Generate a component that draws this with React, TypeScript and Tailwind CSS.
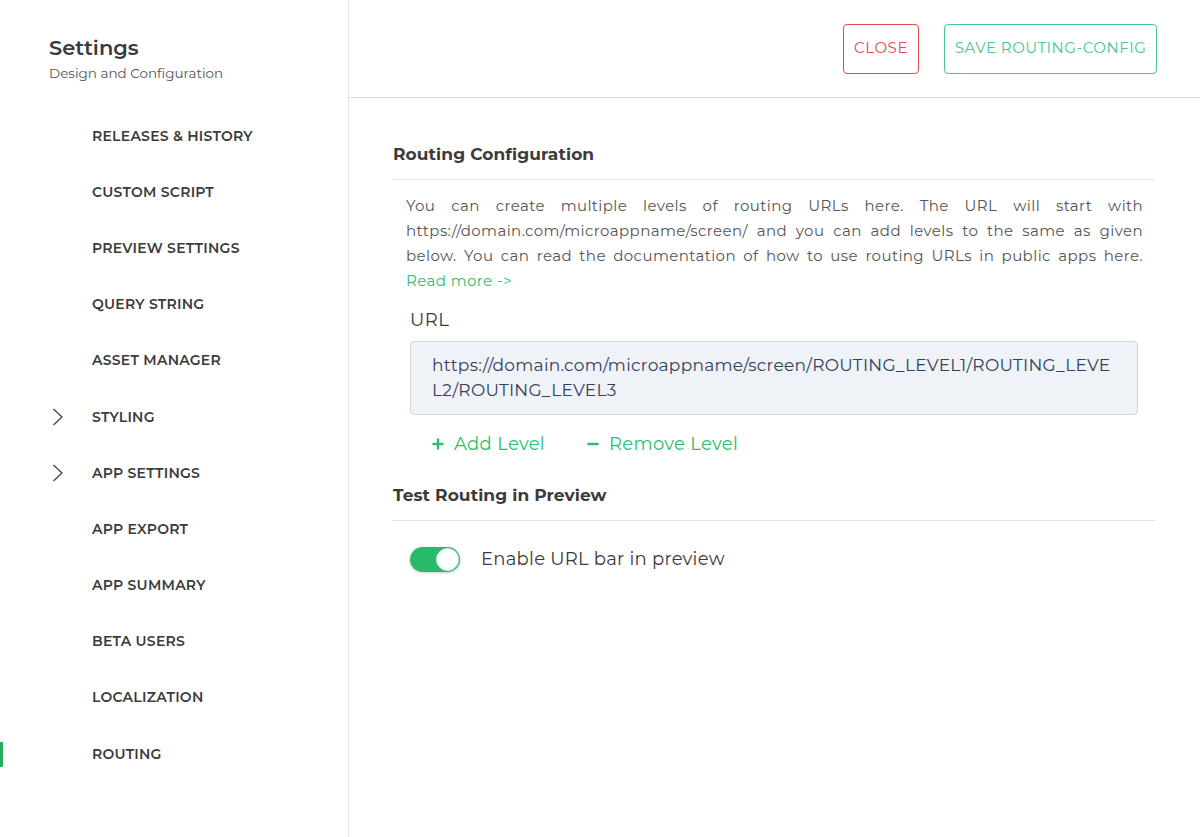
import { Plus, Minus } from "lucide-react"

const navItems = [
  { label: "RELEASES & HISTORY" },
  { label: "CUSTOM SCRIPT" },
  { label: "PREVIEW SETTINGS" },
  { label: "QUERY STRING" },
  { label: "ASSET MANAGER" },
  { label: "STYLING", chevron: true },
  { label: "APP SETTINGS", chevron: true },
  { label: "APP EXPORT" },
  { label: "APP SUMMARY" },
  { label: "BETA USERS" },
  { label: "LOCALIZATION" },
  { label: "ROUTING", active: true },
]

function Chevron() {
  return (
    <svg width="12" height="18" viewBox="0 0 12 18" fill="none" stroke="#444" strokeWidth="1.3">
      <path d="M1.5 1 L10 9 L1.5 17" />
    </svg>
  )
}

function Sidebar() {
  return (
    <aside className="w-[349px] shrink-0 border-r border-[#e3e3e3] min-h-[837px]">
      <div className="pl-[49px] pt-[35px]">
        <h1 className="text-[21px] leading-[26px] font-semibold text-[#3b3b3b]">Settings</h1>
        <p className="text-[13.5px] leading-[16px] mt-[4px] text-[#555]">Design and Configuration</p>
      </div>
      <nav className="mt-[27px]">
        {navItems.map((item) => (
          <div key={item.label} className="relative h-[56.2px] flex items-center">
            {item.active && <span className="absolute left-0 top-[16px] w-[3px] h-[25px] bg-[#27ae60]" />}
            <span className="w-[92px] flex justify-start pl-[52px]">{item.chevron && <Chevron />}</span>
            <span className="text-[14px] font-semibold tracking-[0.25px] text-[#3b3b3b]">{item.label}</span>
          </div>
        ))}
      </nav>
    </aside>
  )
}

function JustLine({ children }: { children: React.ReactNode }) {
  return <span className="block text-justify [text-align-last:justify]">{children}</span>
}

export default function App() {
  return (
    <div className="flex bg-white min-h-[837px] text-[#3b3b3b]" style={{ fontFamily: "Montserrat, 'DejaVu Sans', sans-serif" }}>
      <Sidebar />
      <main className="flex-1">
        <header className="h-[98px] border-b border-[#dedede] flex items-center justify-end gap-[25px] pr-[43px]">
          <button className="h-[50px] w-[76px] rounded-[4px] border border-[#e5484d] text-[#e5484d] text-[15px] tracking-[0.6px]">CLOSE</button>
          <button className="h-[50px] w-[213px] rounded-[4px] border border-[#48c78e] text-[#48c78e] text-[15px] tracking-[0.5px]">SAVE ROUTING-CONFIG</button>
        </header>
        <section className="pl-[44px] pr-[45px] pt-[44px]">
          <h2 className="text-[17px] font-bold leading-[24px] pb-[13px] border-b border-[#e3e3e3] tracking-[0.1px]">Routing Configuration</h2>
          <div className="pl-[13px] pr-[12px] pt-[13px] text-[15px] leading-[25px] text-[#555] tracking-[0.4px]">
            <JustLine>You can create multiple levels of routing URLs here. The URL will start with</JustLine>
            <JustLine>https://domain.com/microappname/screen/ and you can add levels to the same as given</JustLine>
            <JustLine>below. You can read the documentation of how to use routing URLs in public apps here.</JustLine>
            <span className="block text-[#2ebd6b]">Read more -&gt;</span>
          </div>
          <div className="pl-[17px] mt-[15px] text-[18px] leading-[24px] tracking-[0.5px]">URL</div>
          <div className="ml-[17px] mr-[17px] mt-[9px] h-[74px] rounded-[4px] border border-[#d3d6dc] bg-[#eff2f7] pl-[21px] pt-[11px] text-[17px] leading-[25px] tracking-[0.27px] text-[#34405a]">
            <span className="block">https://domain.com/microappname/screen/ROUTING_LEVEL1/ROUTING_LEVE</span>
            <span className="block">L2/ROUTING_LEVEL3</span>
          </div>
          <div className="flex items-center gap-[40px] pl-[37px] mt-[17px] text-[18px] text-[#2ebd6b] leading-[24px] tracking-[0.3px]">
            <span className="flex items-center gap-[8px]"><Plus className="w-[16px] h-[16px]" strokeWidth={3.4} />Add Level</span>
            <span className="flex items-center gap-[8px]"><Minus className="w-[16px] h-[16px]" strokeWidth={3.4} />Remove Level</span>
          </div>
          <h2 className="mt-[27px] text-[17px] font-bold leading-[24px] pb-[13px] border-b border-[#e3e3e3] tracking-[0.1px]">Test Routing in Preview</h2>
          <div className="flex items-center pl-[17px] mt-[25px]">
            <span className="relative w-[50px] h-[25px] rounded-full bg-[#27ba6a] shadow-[0_1px_3px_rgba(0,0,0,0.2)]">
              <span className="absolute right-[1px] top-[1px] w-[23px] h-[23px] rounded-full bg-white border border-[#cfeedd]" />
            </span>
            <span className="ml-[21px] text-[18px] tracking-[0.25px]">Enable URL bar in preview</span>
          </div>
        </section>
      </main>
    </div>
  )
}
